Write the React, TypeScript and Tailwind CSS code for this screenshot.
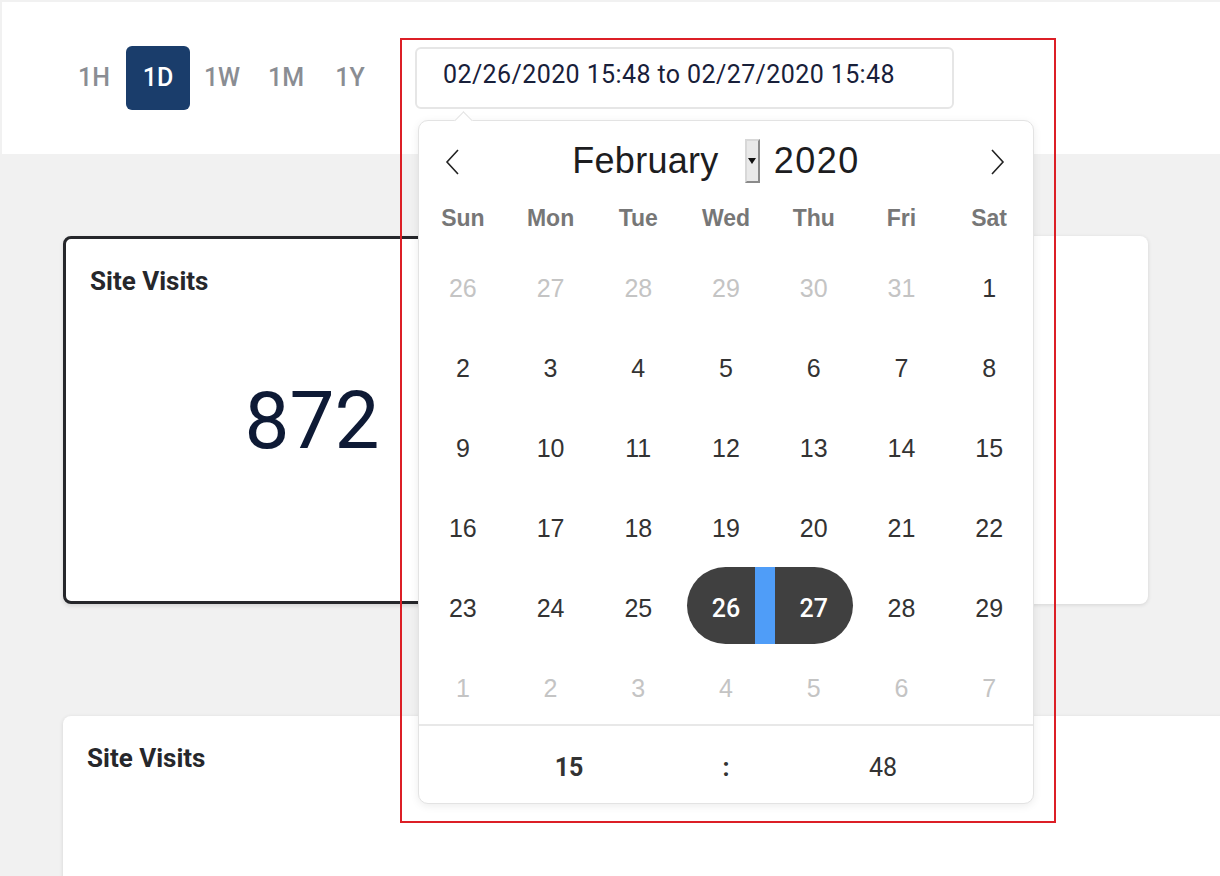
import React from 'react';

const ranges = ['1H', '1D', '1W', '1M', '1Y'];
const weekdays = ['Sun', 'Mon', 'Tue', 'Wed', 'Thu', 'Fri', 'Sat'];

type Day = { n: number; muted?: boolean };

const weeks: Day[][] = [
  [26, 27, 28, 29, 30, 31].map((n) => ({ n, muted: true })).concat([{ n: 1 }]),
  [2, 3, 4, 5, 6, 7, 8].map((n) => ({ n })),
  [9, 10, 11, 12, 13, 14, 15].map((n) => ({ n })),
  [16, 17, 18, 19, 20, 21, 22].map((n) => ({ n })),
  [23, 24, 25, 26, 27, 28, 29].map((n) => ({ n })),
  [1, 2, 3, 4, 5, 6, 7].map((n) => ({ n, muted: true })),
];

const DayCell: React.FC<{ day: Day; row: number }> = ({ day, row }) => {
  const start = row === 4 && day.n === 26;
  const end = row === 4 && day.n === 27;
  return (
    <div className="relative flex items-center justify-center h-[80px]">
      {start && (
        <>
          <div className="absolute left-[5px] right-0 top-[-2px] bottom-[5px] bg-[#404040] rounded-l-full" />
          <div className="absolute left-[73px] w-[20px] top-[-2px] bottom-[5px] bg-[#4f9df8] z-10" />
        </>
      )}
      {end && <div className="absolute left-0 right-[5px] top-[-2px] bottom-[5px] bg-[#404040] rounded-r-full" />}
      <span
        className={`relative text-[25px] ${
          start || end ? 'text-white font-medium font-[Roboto,sans-serif]' : day.muted ? 'text-[#c4c4c4]' : 'text-[#333333]'
        }`}
      >
        {day.n}
      </span>
    </div>
  );
};

const Calendar: React.FC = () => (
  <div className="absolute left-[418px] top-[120px] w-[616px] h-[684px] bg-white border border-[#e3e3e3] rounded-[10px] shadow-[0_2px_8px_rgba(0,0,0,0.08)] font-['Liberation_Sans',Arial,sans-serif] z-20">
    <div className="absolute left-[38px] top-[-7px] w-[13px] h-[13px] bg-white border-l border-t border-[#e3e3e3] rotate-45" />

    <div className="relative flex items-center justify-center h-[80px] pr-[20px]">
      <svg className="absolute left-[24px] top-[27px]" width="20" height="28" viewBox="0 0 20 28">
        <polyline points="15,2 4,14 15,26" fill="none" stroke="#222" strokeWidth="1.6" />
      </svg>
      <span className="text-[36px] text-[#1d1d1f] tracking-[0.3px]">February</span>
      <div className="ml-[26px] w-[15px] h-[44px] bg-[#e9e9e9] border-l-2 border-t-2 border-[#d8d8d8] border-r-2 border-b-2 border-r-[#8a8a8a] border-b-[#8a8a8a] flex items-center justify-center">
        <div className="w-0 h-0 border-l-[4px] border-r-[4px] border-t-[6px] border-l-transparent border-r-transparent border-t-[#111]" />
      </div>
      <span className="ml-[14px] text-[36px] text-[#1d1d1f] tracking-[1.5px]">2020</span>
      <svg className="absolute right-[26px] top-[27px]" width="20" height="28" viewBox="0 0 20 28">
        <polyline points="5,2 16,14 5,26" fill="none" stroke="#222" strokeWidth="1.6" />
      </svg>
    </div>

    <div className="grid grid-cols-7 h-[34px] items-center">
      {weekdays.map((d) => (
        <div key={d} className="text-center text-[23px] font-bold text-[#777777]">
          {d}
        </div>
      ))}
    </div>

    <div className="mt-[14px] h-[475px] grid grid-cols-7 auto-rows-[80px]">
      {weeks.map((w, r) => w.map((d, i) => <DayCell key={`${r}-${i}`} day={d} row={r} />))}
    </div>

    <div className="border-t-2 border-[#e8e8e8] h-[79px] pt-[6px] flex items-center justify-center text-[25px] text-[#333] font-['Roboto',sans-serif]">
      <span className="w-[157px] text-center font-bold">15</span>
      <span className="w-[157px] text-center font-bold">:</span>
      <span className="w-[157px] text-center">48</span>
    </div>
  </div>
);

export default function App() {
  return (
    <div className="relative w-[1220px] h-[876px] overflow-hidden bg-[#f1f1f1] pl-[2px] pt-[2px] font-['Roboto',sans-serif]">
      <header className="h-[152px] bg-white flex items-start pt-[44px] pl-[60px]">
        <div className="flex">
          {ranges.map((r) => (
            <button
              key={r}
              className={`w-[64px] h-[64px] rounded-[6px] text-[25px] font-medium ${
                r === '1D' ? 'bg-[#1a3d6b] text-white' : 'text-[#8a8d93]'
              }`}
            >
              {r}
            </button>
          ))}
        </div>
        <div className="ml-[33px] mt-[1px] w-[539px] h-[62px] border-2 border-[#e6e6e6] rounded-[6px] flex items-center pl-[26px] pb-[6px] text-[25px] text-[#18203a] tracking-[0.4px]">
          02/26/2020 15:48 to 02/27/2020 15:48
        </div>
      </header>

      <main className="pl-[61px] pt-[82px]">
        <div className="flex gap-[24px]">
          <div className="w-[498px] h-[368px] bg-white border-[3px] border-[#26272b] rounded-[8px] shadow-[0_2px_4px_rgba(0,0,0,0.12)] px-[24px] pt-[23px] flex flex-col">
            <h2 className="text-[26px] font-bold text-[#26272b]">Site Visits</h2>
            <div className="flex-1 flex items-center justify-center pb-[60px]">
              <span className="text-[80px] text-[#0e1a35] leading-none">872</span>
            </div>
          </div>
          <div className="w-[563px] h-[368px] bg-white rounded-[8px] shadow-[0_1px_4px_rgba(0,0,0,0.12)]" />
        </div>

        <div className="mt-[112px] w-[1200px] h-[200px] bg-white rounded-[8px] shadow-[0_1px_4px_rgba(0,0,0,0.12)] px-[24px] pt-[23px]">
          <h2 className="text-[26px] font-bold text-[#26272b]">Site Visits</h2>
        </div>
      </main>

      <Calendar />
      <div className="absolute left-[400px] top-[38px] w-[656px] h-[785px] border-2 border-[#dc1f26] z-30 pointer-events-none" />
    </div>
  );
}
